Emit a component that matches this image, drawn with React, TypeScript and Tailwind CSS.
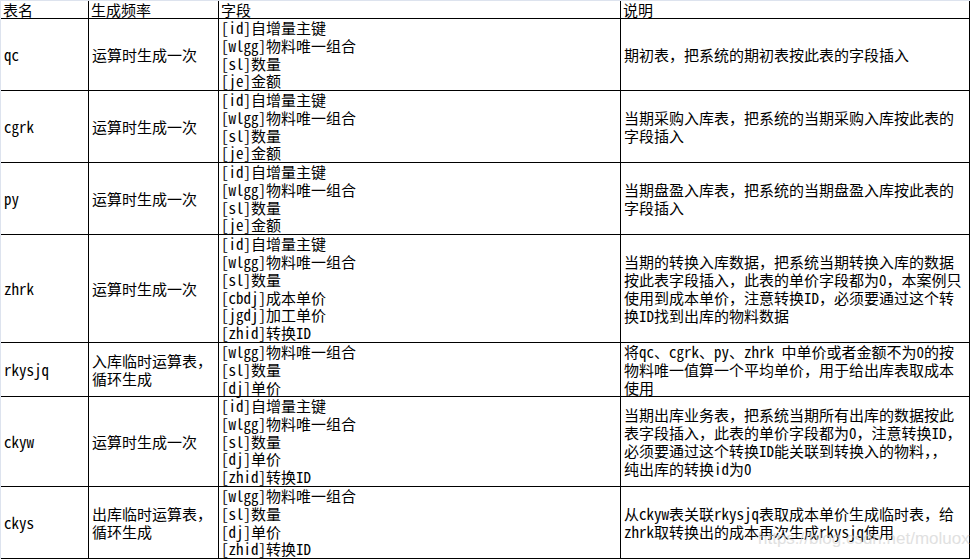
const FONT = "font-['Noto_Sans_Mono_CJK_SC','Noto_Sans_CJK_SC',monospace]";

type Row = {
  name: string;
  freq: string[];
  fields: string[];
  desc: string[];
  h: string;
};

const rows: Row[] = [
  {
    name: "qc",
    freq: ["运算时生成一次"],
    fields: ["[id]自增量主键", "[wlgg]物料唯一组合", "[sl]数量", "[je]金额"],
    desc: ["期初表，把系统的期初表按此表的字段插入"],
    h: "h-[72px]",
  },
  {
    name: "cgrk",
    freq: ["运算时生成一次"],
    fields: ["[id]自增量主键", "[wlgg]物料唯一组合", "[sl]数量", "[je]金额"],
    desc: ["当期采购入库表，把系统的当期采购入库按此表的", "字段插入"],
    h: "h-[72px]",
  },
  {
    name: "py",
    freq: ["运算时生成一次"],
    fields: ["[id]自增量主键", "[wlgg]物料唯一组合", "[sl]数量", "[je]金额"],
    desc: ["当期盘盈入库表，把系统的当期盘盈入库按此表的", "字段插入"],
    h: "h-[72px]",
  },
  {
    name: "zhrk",
    freq: ["运算时生成一次"],
    fields: [
      "[id]自增量主键",
      "[wlgg]物料唯一组合",
      "[sl]数量",
      "[cbdj]成本单价",
      "[jgdj]加工单价",
      "[zhid]转换ID",
    ],
    desc: [
      "当期的转换入库数据，把系统当期转换入库的数据",
      "按此表字段插入，此表的单价字段都为0，本案例只",
      "使用到成本单价，注意转换ID，必须要通过这个转",
      "换ID找到出库的物料数据",
    ],
    h: "h-[108px]",
  },
  {
    name: "rkysjq",
    freq: ["入库临时运算表，", "循环生成"],
    fields: ["[wlgg]物料唯一组合", "[sl]数量", "[dj]单价"],
    desc: [
      "将qc、cgrk、py、zhrk 中单价或者金额不为0的按",
      "物料唯一值算一个平均单价，用于给出库表取成本",
      "使用",
    ],
    h: "h-[54px]",
  },
  {
    name: "ckyw",
    freq: ["运算时生成一次"],
    fields: ["[id]自增量主键", "[wlgg]物料唯一组合", "[sl]数量", "[dj]单价", "[zhid]转换ID"],
    desc: [
      "当期出库业务表，把系统当期所有出库的数据按此",
      "表字段插入，此表的单价字段都为0，注意转换ID，",
      "必须要通过这个转换ID能关联到转换入的物料，，",
      "纯出库的转换id为0",
    ],
    h: "h-[90px]",
  },
  {
    name: "ckys",
    freq: ["出库临时运算表，", "循环生成"],
    fields: ["[wlgg]物料唯一组合", "[sl]数量", "[dj]单价", "[zhid]转换ID"],
    desc: ["从ckyw表关联rkysjq表取成本单价生成临时表，给", "zhrk取转换出的成本再次生成rkysjq使用"],
    h: "h-[72px]",
  },
];

function Lines({ lines, tight }: { lines: string[]; tight?: boolean }) {
  return (
    <div className={tight ? "leading-[17.75px]" : ""}>
      {lines.map((l, i) => (
        <div key={i} className="whitespace-pre">
          {l}
        </div>
      ))}
    </div>
  );
}

export default function App() {
  return (
    <div
      className={`relative h-[559px] w-[970px] overflow-hidden border-t border-l border-[#dde3ee] bg-white text-[15px] leading-[18px] text-black ${FONT}`}
    >
      <div className="grid h-[18px] grid-cols-[88px_130px_402px_349px] border-b border-black">
        <div className="border-r border-black pl-[2px]">表名</div>
        <div className="border-r border-black pl-[2px]">生成频率</div>
        <div className="border-r border-black pl-[2px]">字段</div>
        <div className="border-r border-black pl-[2px]">说明</div>
      </div>

      {rows.map((r) => (
        <div
          key={r.name}
          className={`grid grid-cols-[88px_130px_402px_349px] border-b border-black ${r.h}`}
        >
          <div className="flex items-center border-r border-black pl-[3px]">{r.name}</div>
          <div className="flex items-center border-r border-black pl-[3px]">
            <Lines lines={r.freq} />
          </div>
          <div className="flex items-center border-r border-black pl-[2px]">
            <Lines lines={r.fields} tight />
          </div>
          <div className="flex items-center border-r border-black pl-[3px]">
            <Lines lines={r.desc} />
          </div>
        </div>
      ))}

      {/* blog watermark */}
      <div className="pointer-events-none absolute left-[757px] top-[528px] font-['Liberation_Sans',sans-serif] text-[17px] leading-[20px] text-[#d4d4d4] opacity-70">
        https://blog.csdn.net/moluoxi
      </div>
    </div>
  );
}
